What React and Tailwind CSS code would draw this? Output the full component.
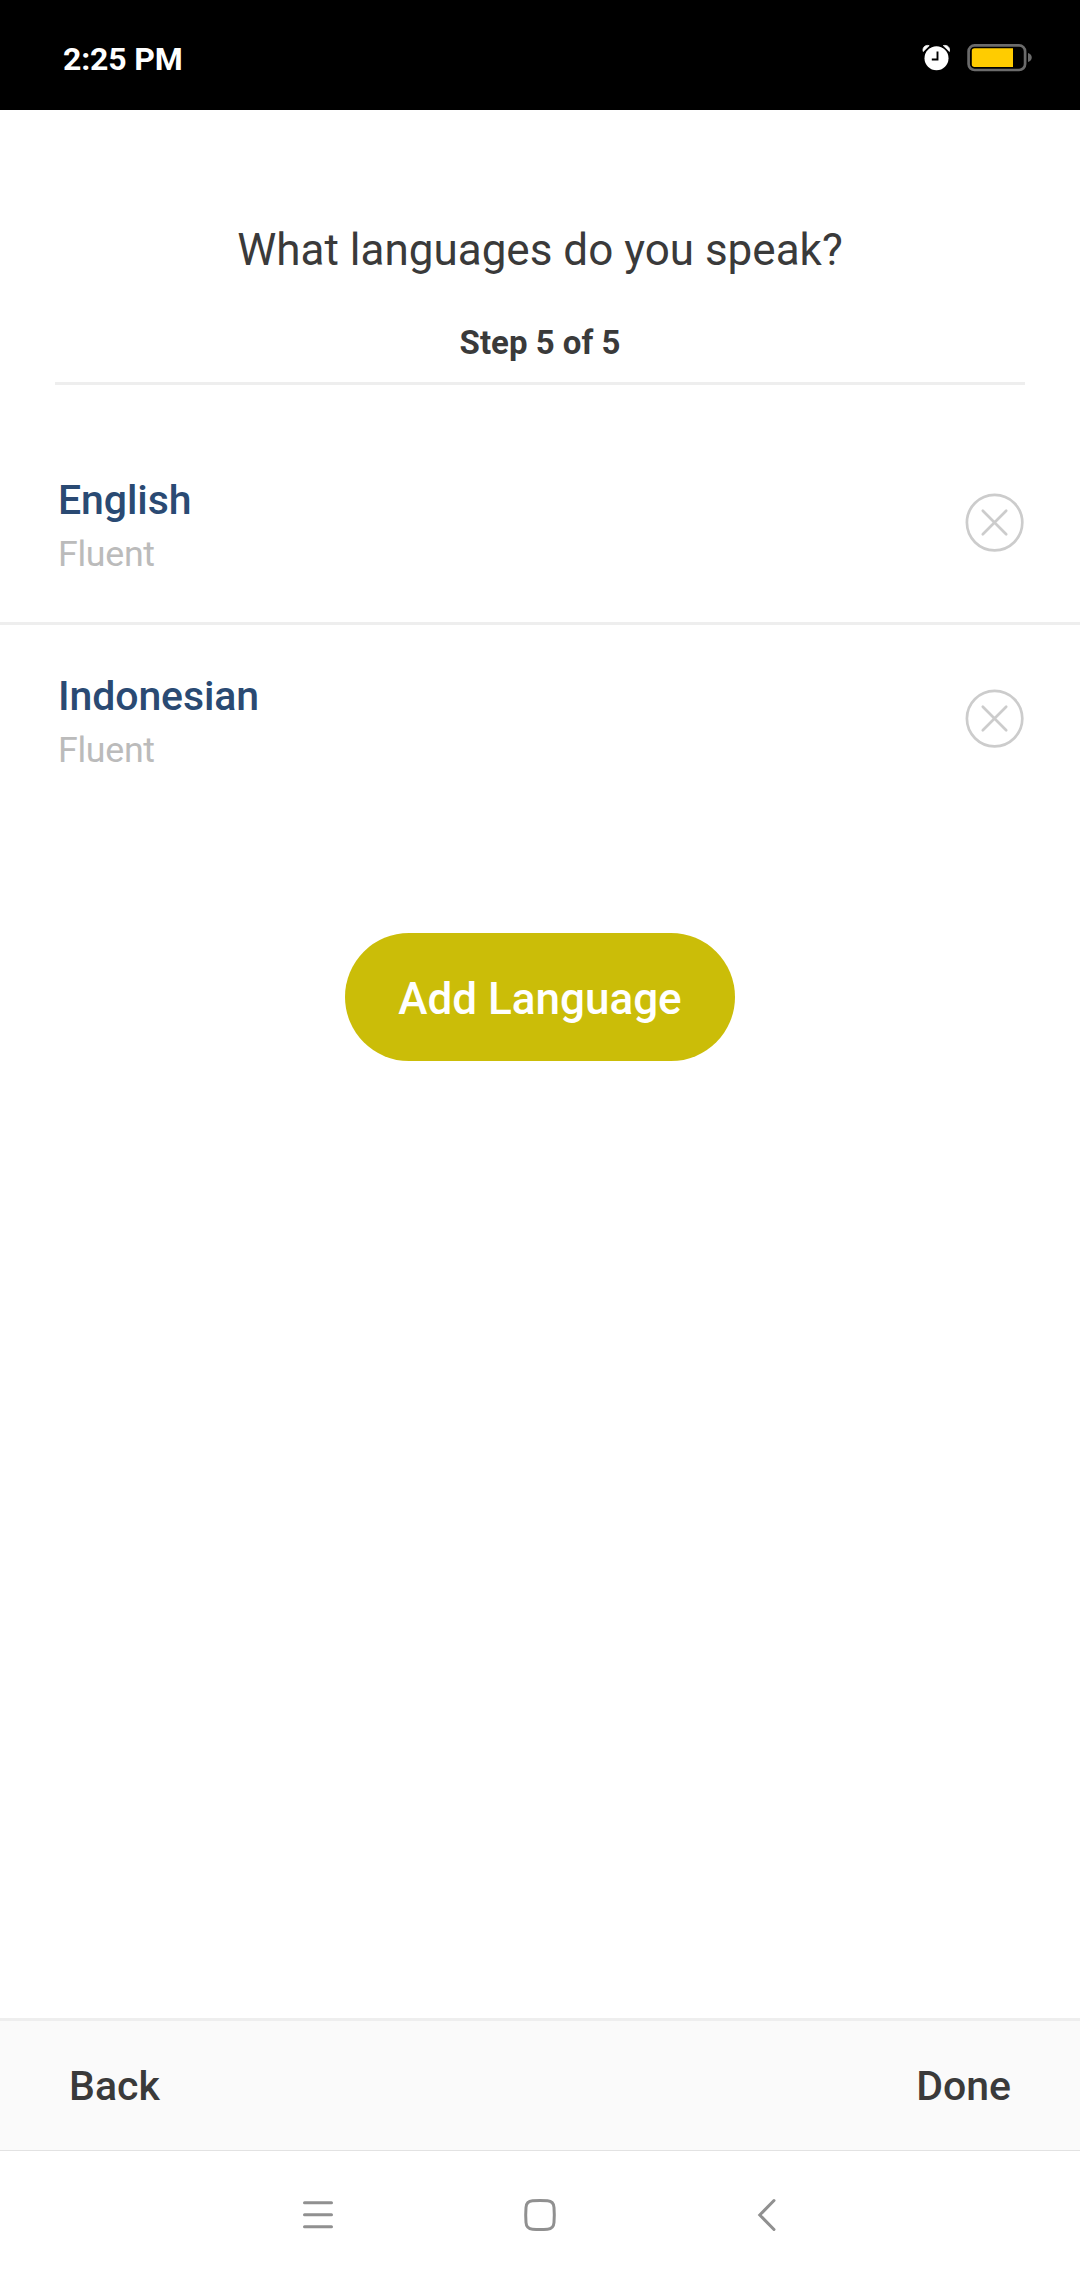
const languages = [
  { name: "English", level: "Fluent" },
  { name: "Indonesian", level: "Fluent" },
];

function AlarmIcon() {
  return (
    <svg className="h-[28px] w-[28px]" viewBox="0 0 28 28">
      <circle cx="14.500" cy="14.300" r="12" fill="#fff" />
      <path d="M1.200 7.500C.2 3.500 3 .6 7.200 1.600Z" fill="#fff" stroke="#fff" strokeWidth=".8" strokeLinejoin="round" />
      <path d="M27.400 7.500C28.300 3.500 25.500.6 21.300 1.600Z" fill="#fff" stroke="#fff" strokeWidth=".8" strokeLinejoin="round" />
      <path d="M3.200 7.800Q5 4.600 8.600 2.900M25.600 7.800Q23.800 4.600 20.200 2.900" fill="none" stroke="#000" strokeWidth=".9" />
      <path d="M15.500 7.500v8H9.800" fill="none" stroke="#000" strokeWidth="1.900" />
    </svg>
  );
}

function BatteryIcon() {
  return (
    <svg className="h-[28px] w-[66px]" viewBox="0 0 66 28">
      <rect x="1.600" y="1.400" width="56.500" height="24.600" rx="6" fill="none" stroke="#6b6b6b" strokeWidth="2.700" />
      <path d="M7.500 4.200H46V22.900H7.500a2.700 2.700 0 0 1-2.700-2.700V6.900A2.700 2.700 0 0 1 7.500 4.200Z" fill="#ffcc00" />
      <path d="M61 9c5 1.500 5 7.500 0 9Z" fill="#6b6b6b" />
    </svg>
  );
}

function RemoveIcon() {
  return (
    <svg className="h-[60px] w-[60px]" viewBox="0 0 60 60" fill="none" stroke="#cccccc" strokeWidth="2.700" strokeLinecap="round">
      <circle cx="29.600" cy="29.600" r="27.700" />
      <path d="M17.800 17.800 41.200 41.200M41.200 17.800 17.800 41.200" />
    </svg>
  );
}

export default function App() {
  return (
    <div className="flex h-[2280px] w-[1080px] flex-col bg-white font-['Roboto',sans-serif] text-[#3a3a3a]">
      <header className="flex h-[110px] items-start justify-between bg-black pr-[47px] pl-[63px]">
        <span className="pt-[39px] text-[32px] leading-[41px] font-bold tracking-[-0.15px] text-white">2:25 PM</span>
        <div className="flex gap-[17px] pt-[44px]">
          <AlarmIcon />
          <BatteryIcon />
        </div>
      </header>

      <main className="flex flex-1 flex-col">
        <div className="mx-[55px] flex h-[275px] flex-col items-center border-b-[3px] border-[#eeeeee] pt-[110px]">
          <h1 className="text-[44px] leading-[60px]">What languages do you speak?</h1>
          <p className="mt-[43px] text-[33px] leading-[40px] font-bold">Step 5 of 5</p>
        </div>

        <ul className="mt-[44px]">
          {languages.map((l) => (
            <li key={l.name} className="flex h-[196px] items-start justify-between border-b-[3px] border-[#eeeeee] pr-[55px] pl-[58px] last:border-transparent">
              <div className="pt-[46px]">
                <div className="text-[41px] leading-[50px] font-medium tracking-[-0.1px] text-[#2a4a73]">{l.name}</div>
                <div className="mt-[4px] text-[35.750px] leading-[50px] tracking-[-0.3px] text-[#bbbbbb]">{l.level}</div>
              </div>
              <button className="mt-[64px]" aria-label={"Remove " + l.name}>
                <RemoveIcon />
              </button>
            </li>
          ))}
        </ul>

        <button className="mt-[112px] h-[128px] w-[390px] self-center rounded-full bg-[#cbbd08] pt-[4px] text-[44px] font-medium text-white">
          Add Language
        </button>
      </main>

      <footer className="flex h-[133px] items-center justify-between border-t-[3px] border-b border-t-[#eeeeee] border-b-[#e2e2e2] bg-[#fafafa] px-[69px] pt-[3px] text-[41px] font-medium">
        <button>Back</button>
        <button>Done</button>
      </footer>

      <nav className="grid h-[129px] grid-cols-[32px_34px_24px] items-start pt-[43px] pl-[302px] [column-gap:189px]">
        <svg className="h-[42px] w-[32px]" viewBox="0 0 32 42" fill="none" stroke="#909090" strokeWidth="3" strokeLinecap="round">
          <path d="M2.500 8.800h27M2.500 20.800h27M2.500 32.800h27" />
        </svg>
        <svg className="h-[42px] w-[34px]" viewBox="0 0 34 42" fill="none" stroke="#909090" strokeWidth="3">
          <path d="M9.500 6.800Q17 6.200 24.500 6.800Q30.600 7.200 31 13.500Q31.600 21 31 28.500Q30.600 34.800 24.500 35.200Q17 35.800 9.500 35.200Q3.400 34.800 3 28.500Q2.400 21 3 13.500Q3.400 7.200 9.500 6.800Z" />
        </svg>
        <svg className="ml-[10px] h-[42px] w-[24px]" viewBox="0 0 24 42" fill="none" stroke="#909090" strokeWidth="3" strokeLinecap="round">
          <path d="M18 6.500 3.800 21 18 35.500" />
        </svg>
      </nav>
    </div>
  );
}
